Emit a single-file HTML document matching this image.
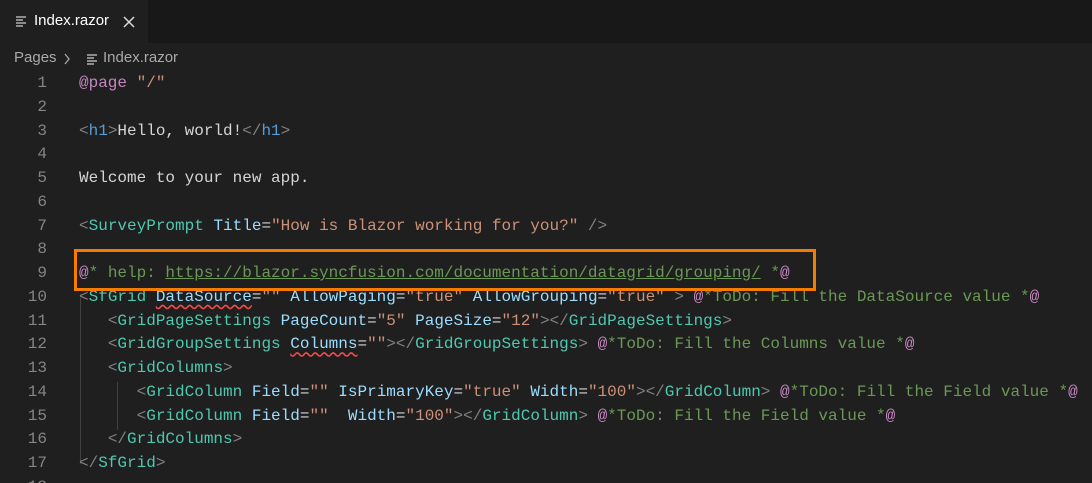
<!DOCTYPE html>
<html><head><meta charset="utf-8"><style>
html,body{margin:0;width:1092px;height:483px;overflow:hidden}
body{background:#1f1f1f;font-family:"Liberation Sans",sans-serif;position:relative}
.tabbar{position:absolute;left:0;top:0;width:1092px;height:43px;background:#181818}
.tab{position:absolute;left:0;top:0;width:148px;height:43px;background:#1f1f1f;color:#fff;font-size:15px}
.crumb{position:absolute;left:14px;top:49px;color:#a9a9a9;font-size:15px}
.code{position:absolute;left:0;top:72px;font-family:"Liberation Mono",monospace;font-size:16px;line-height:23.75px;white-space:pre}
.ln{position:absolute;left:0;width:47px;text-align:right;color:#858585}
.tx{position:absolute;left:79px;color:#d4d4d4}
.p{color:#808080}.t{color:#4ec9b0}.h{color:#569cd6}.a{color:#9cdcfe}.s{color:#ce9178}.c{color:#6a9955}.m{color:#c586c0}
.u{text-decoration:underline}.w{text-decoration:underline wavy #f14c4c;text-underline-offset:3px}
.box{position:absolute;left:74px;top:249px;width:736px;height:36px;border:3px solid #f57c00}
.g{position:absolute;width:1px;background:#404040}
svg{position:absolute}
</style></head><body>
<div class="tabbar"><div class="tab">
<svg width="12" height="12" style="left:15px;top:15px"><path d="M1 2h10M1 5h7M1 8h10M1 11h7" stroke="#ccc" stroke-width="1.3"/></svg>
<span style="position:absolute;left:34px;top:12px">Index.razor</span>
<svg width="12" height="12" style="left:123px;top:16px"><path d="M1 1L11 11M11 1L1 11" stroke="#ddd" stroke-width="1.5"/></svg>
</div></div>
<div class="crumb">Pages
<svg width="8" height="12" style="left:49px;top:4px"><path d="M2 1L6 6L2 11" stroke="#aaa" stroke-width="1.3" fill="none"/></svg>
<svg width="12" height="12" style="left:72px;top:4px"><path d="M1 2h10M1 5h7M1 8h10M1 11h7" stroke="#ccc" stroke-width="1.3"/></svg>
<span style="position:absolute;left:89px;top:0;white-space:nowrap">Index.razor</span></div>
<div class="g" style="left:80px;top:298px;height:166px"></div>
<div class="g" style="left:117px;top:382px;height:48px"></div>
<div class="code">
<div class="ln" style="top:0">1</div><div class="tx" style="top:0"><span class="m">@page</span> <span class="s">"/"</span></div>
<div class="ln" style="top:23.75px">2</div>
<div class="ln" style="top:47.5px">3</div><div class="tx" style="top:47.5px"><span class="p">&lt;</span><span class="h">h1</span><span class="p">&gt;</span>Hello, world!<span class="p">&lt;/</span><span class="h">h1</span><span class="p">&gt;</span></div>
<div class="ln" style="top:71.25px">4</div>
<div class="ln" style="top:95px">5</div><div class="tx" style="top:95px">Welcome to your new app.</div>
<div class="ln" style="top:118.75px">6</div>
<div class="ln" style="top:142.5px">7</div><div class="tx" style="top:142.5px"><span class="p">&lt;</span><span class="t">SurveyPrompt</span> <span class="a">Title</span>=<span class="s">"How is Blazor working for you?"</span> <span class="p">/&gt;</span></div>
<div class="ln" style="top:166.25px">8</div>
<div class="ln" style="top:190px">9</div><div class="tx" style="top:190px"><span class="m">@</span><span class="c">* help: <span class="u">https://blazor.syncfusion.com/documentation/datagrid/grouping/</span> </span><span class="c">*</span><span class="m">@</span></div>
<div class="ln" style="top:213.75px">10</div><div class="tx" style="top:213.75px"><span class="p">&lt;</span><span class="t">SfGrid</span> <span class="a w">DataSource</span>=<span class="s">""</span> <span class="a">AllowPaging</span>=<span class="s">"true"</span> <span class="a">AllowGrouping</span>=<span class="s">"true"</span> <span class="p">&gt;</span> <span class="m">@</span><span class="c">*ToDo: Fill the DataSource value *</span><span class="m">@</span></div>
<div class="ln" style="top:237.5px">11</div><div class="tx" style="top:237.5px">   <span class="p">&lt;</span><span class="t">GridPageSettings</span> <span class="a">PageCount</span>=<span class="s">"5"</span> <span class="a">PageSize</span>=<span class="s">"12"</span><span class="p">&gt;&lt;/</span><span class="t">GridPageSettings</span><span class="p">&gt;</span></div>
<div class="ln" style="top:261.25px">12</div><div class="tx" style="top:261.25px">   <span class="p">&lt;</span><span class="t">GridGroupSettings</span> <span class="a w">Columns</span>=<span class="s">""</span><span class="p">&gt;&lt;/</span><span class="t">GridGroupSettings</span><span class="p">&gt;</span> <span class="m">@</span><span class="c">*ToDo: Fill the Columns value *</span><span class="m">@</span></div>
<div class="ln" style="top:285px">13</div><div class="tx" style="top:285px">   <span class="p">&lt;</span><span class="t">GridColumns</span><span class="p">&gt;</span></div>
<div class="ln" style="top:308.75px">14</div><div class="tx" style="top:308.75px">      <span class="p">&lt;</span><span class="t">GridColumn</span> <span class="a">Field</span>=<span class="s">""</span> <span class="a">IsPrimaryKey</span>=<span class="s">"true"</span> <span class="a">Width</span>=<span class="s">"100"</span><span class="p">&gt;&lt;/</span><span class="t">GridColumn</span><span class="p">&gt;</span> <span class="m">@</span><span class="c">*ToDo: Fill the Field value *</span><span class="m">@</span></div>
<div class="ln" style="top:332.5px">15</div><div class="tx" style="top:332.5px">      <span class="p">&lt;</span><span class="t">GridColumn</span> <span class="a">Field</span>=<span class="s">""</span>  <span class="a">Width</span>=<span class="s">"100"</span><span class="p">&gt;&lt;/</span><span class="t">GridColumn</span><span class="p">&gt;</span> <span class="m">@</span><span class="c">*ToDo: Fill the Field value *</span><span class="m">@</span></div>
<div class="ln" style="top:356.25px">16</div><div class="tx" style="top:356.25px">   <span class="p">&lt;/</span><span class="t">GridColumns</span><span class="p">&gt;</span></div>
<div class="ln" style="top:380px">17</div><div class="tx" style="top:380px"><span class="p">&lt;/</span><span class="t">SfGrid</span><span class="p">&gt;</span></div>
<div class="ln" style="top:403.75px">18</div>
</div>
<div class="box"></div>
</body></html>
